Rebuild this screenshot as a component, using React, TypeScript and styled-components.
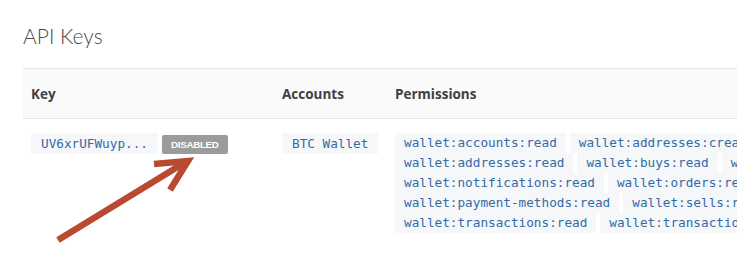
import React, {FC} from 'react';
import styled, {createGlobalStyle} from 'styled-components';

const GlobalStyle = createGlobalStyle`
  html, body {
    margin: 0;
    padding: 0;
    background: #ffffff;
    overflow: hidden;
  }
  body {
    font-family: Lato, "Open Sans", Arial, sans-serif;
  }
`;

const Page = styled.div`
  position: relative;
  width: 737px;
  height: 276px;
  padding: 22px 0 0 23px;
  box-sizing: border-box;
  overflow: hidden;
`;

const Title = styled.h2`
  margin: 0 0 19px 0;
  font-family: Lato, sans-serif;
  font-weight: 300;
  font-size: 21px;
  line-height: 27px;
  color: #4a4a4a;
`;

const Table = styled.div`
  width: 960px;
  display: grid;
  grid-template-columns: 251px 113px 1fr;
`;

const HeadCell = styled.div`
  height: 49px;
  display: flex;
  align-items: center;
  padding-left: 8px;
  background: #fafafa;
  border-top: 1px solid #e6e6e6;
  border-bottom: 1px solid #e6e6e6;
  font-family: "Open Sans", sans-serif;
  font-weight: 700;
  font-size: 13.5px;
  color: #3d4045;
`;

const Cell = styled.div`
  padding: 14px 0 0 8px;
  display: flex;
  align-items: flex-start;
  gap: 4px;
`;

const Code = styled.code`
  display: inline-block;
  height: 21px;
  line-height: 21px;
  padding: 0 10px;
  background: #f6f7f8;
  font-family: "DejaVu Sans Mono", monospace;
  font-size: 12.7px;
  color: #336aa8;
  white-space: nowrap;
`;

const Badge = styled.span`
  margin-top: 2px;
  height: 19px;
  line-height: 19px;
  padding: 0 9px;
  border-radius: 2px;
  background: #9b9b9b;
  color: #ffffff;
  font-family: "Liberation Sans", Arial, sans-serif;
  font-weight: 700;
  font-size: 9.8px;
  letter-spacing: -0.3px;
  text-transform: uppercase;
`;

const PermList = styled.div`
  width: 540px;
  display: flex;
  flex-wrap: wrap;
  column-gap: 4px;
`;

const Perm = styled(Code)`
  height: 20px;
  line-height: 20px;
  padding: 0 9px;
`;

const Arrow = styled.svg`
  position: absolute;
  left: 0;
  top: 0;
  pointer-events: none;
`;

const permissions = [
  'wallet:accounts:read',
  'wallet:addresses:create',
  'wallet:addresses:read',
  'wallet:buys:read',
  'wallet:checkouts:read',
  'wallet:notifications:read',
  'wallet:orders:read',
  'wallet:payment-methods:read',
  'wallet:sells:read',
  'wallet:transactions:read',
  'wallet:transactions:request',
];

const App: FC = () => {
  return (
    <Page>
      <GlobalStyle />
      <Title>API Keys</Title>
      <Table>
        <HeadCell>Key</HeadCell>
        <HeadCell>Accounts</HeadCell>
        <HeadCell>Permissions</HeadCell>
        <Cell>
          <Code>UV6xrUFWuyp...</Code>
          <Badge>Disabled</Badge>
        </Cell>
        <Cell>
          <Code>BTC Wallet</Code>
        </Cell>
        <Cell>
          <PermList>
            {permissions.map((p) => (
              <Perm key={p}>{p}</Perm>
            ))}
          </PermList>
        </Cell>
      </Table>
      <Arrow width="737" height="276" viewBox="0 0 737 276">
        <g stroke="#b94a31" strokeWidth="6.5" fill="none" strokeLinecap="butt" strokeLinejoin="miter">
          <line x1="58" y1="240" x2="184" y2="163" />
          <polyline points="154,164 188,161 170,190" />
        </g>
      </Arrow>
    </Page>
  );
};

export default App;
